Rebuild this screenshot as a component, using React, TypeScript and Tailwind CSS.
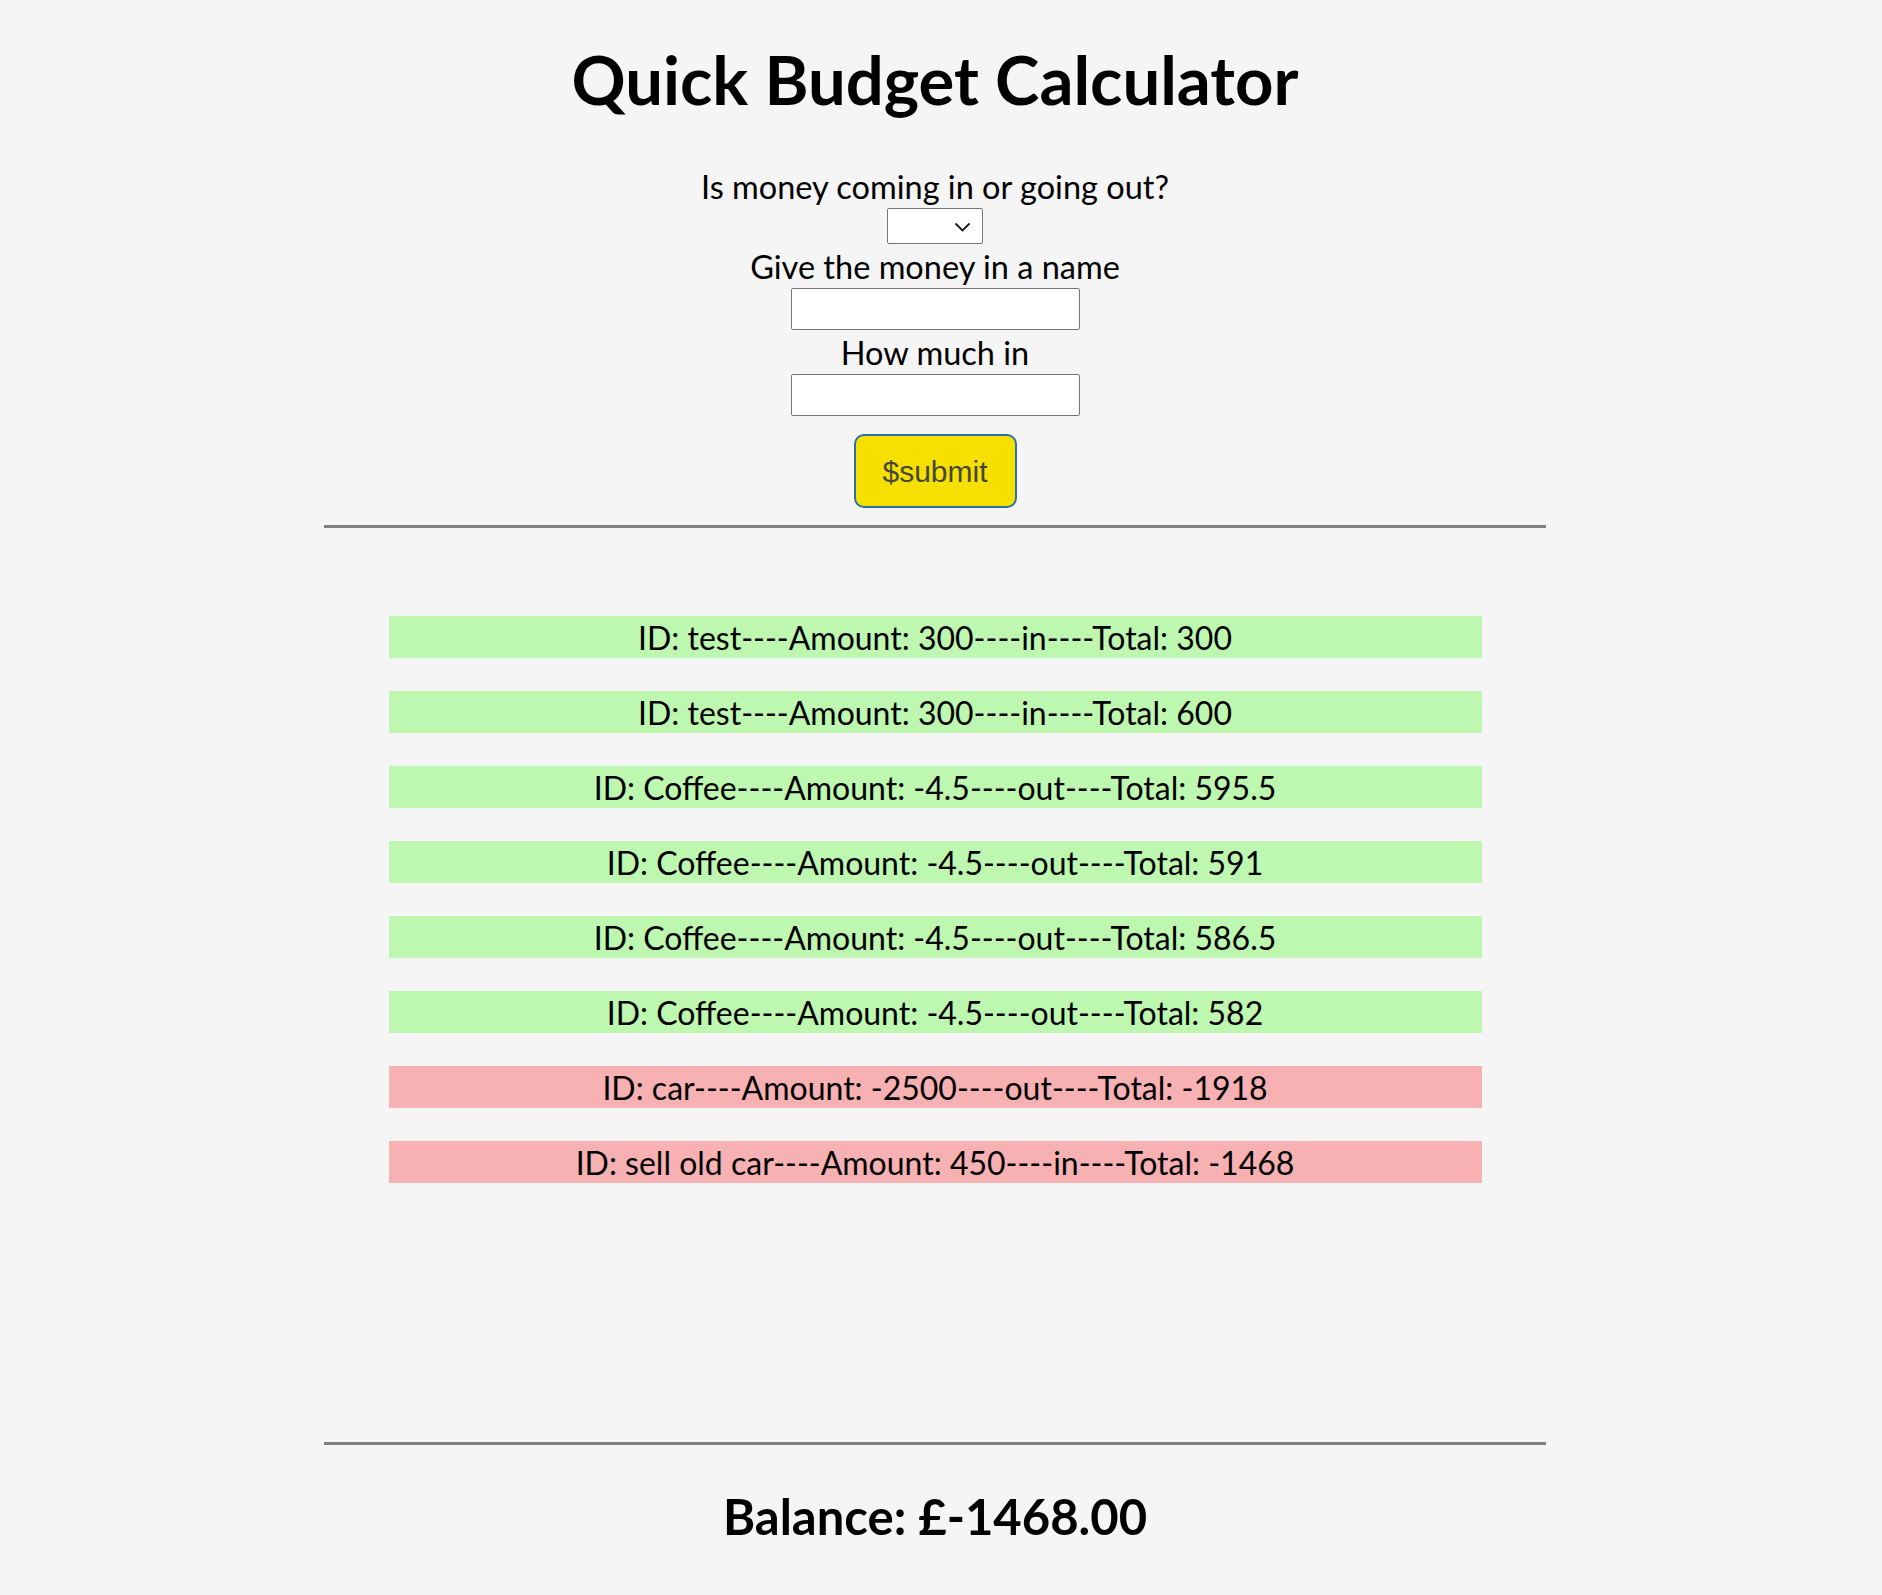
import React from "react";

type Entry = { id: string; amount: string; dir: string; total: string; good: boolean };

const entries: Entry[] = [
  { id: "test", amount: "300", dir: "in", total: "300", good: true },
  { id: "test", amount: "300", dir: "in", total: "600", good: true },
  { id: "Coffee", amount: "-4.5", dir: "out", total: "595.5", good: true },
  { id: "Coffee", amount: "-4.5", dir: "out", total: "591", good: true },
  { id: "Coffee", amount: "-4.5", dir: "out", total: "586.5", good: true },
  { id: "Coffee", amount: "-4.5", dir: "out", total: "582", good: true },
  { id: "car", amount: "-2500", dir: "out", total: "-1918", good: false },
  { id: "sell old car", amount: "450", dir: "in", total: "-1468", good: false },
];

export default function App() {
  return (
    <div className="min-h-screen w-full bg-[#f5f5f5] text-black [font-family:Lato,'Open_Sans',sans-serif]">
      <div className="flex flex-col items-center pr-[12px]">
        <h1 className="mt-[46px] h-[67px] text-[67px] font-bold leading-none">Quick Budget Calculator</h1>

        <div className="mt-[51px] flex flex-col items-center">
          <label className="h-[44px] text-[32.5px] leading-[46px]">Is money coming in or going out?</label>
          <div className="relative h-[36px] w-[96px]">
            <select className="h-[36px] w-[96px] appearance-none rounded-[2px] border border-[#767676] bg-white" defaultValue="">
              <option value=""></option>
              <option value="in">in</option>
              <option value="out">out</option>
            </select>
            <svg
              className="pointer-events-none absolute right-[12px] top-[14px]"
              width="17"
              height="10"
              viewBox="0 0 17 10"
              fill="none"
            >
              <path d="M1.5 1.5 L8.5 8.5 L15.5 1.5" stroke="#1a1a1a" strokeWidth="1.8" />
            </svg>
          </div>
          <label className="h-[44px] text-[32.5px] leading-[46px]">Give the money in a name</label>
          <input type="text" className="h-[42px] w-[289px] rounded-[2px] border border-[#767676] bg-white" />
          <label className="h-[44px] text-[32.5px] leading-[46px]">How much in</label>
          <input type="text" className="h-[42px] w-[289px] rounded-[2px] border border-[#767676] bg-white" />
          <button className="mt-[18px] h-[74px] w-[163px] rounded-[10px] border-2 border-[#2a70a6] bg-[#f5e000] text-[30px] text-[#464640] [font-family:'Liberation_Sans',Arial,sans-serif]">
            $submit
          </button>
        </div>

        <div className="mt-[17px] h-[3px] w-[1222px] bg-[#808080]" />

        <div className="mt-[88px] flex w-[1093px] flex-col gap-[33px]">
          {entries.map((e, i) => (
            <div
              key={i}
              className={
                "h-[42px] text-center text-[32px] leading-[43px] " +
                (e.good ? "bg-[#bdf7b0]" : "bg-[#f8b1b2]")
              }
            >
              {`ID: ${e.id}----Amount: ${e.amount}----${e.dir}----Total: ${e.total}`}
            </div>
          ))}
        </div>

        <div className="mt-[259px] h-[3px] w-[1222px] bg-[#808080]" />

        <h2 className="mt-[47px] text-[49px] font-bold leading-none">Balance: £-1468.00</h2>
      </div>
    </div>
  );
}
